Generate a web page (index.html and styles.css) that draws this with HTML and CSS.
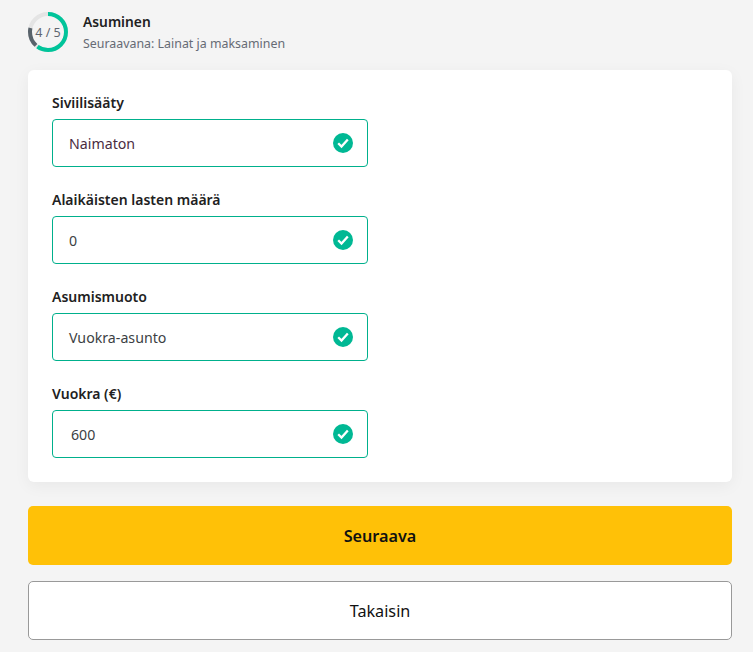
FILE: index.html
```html
<!DOCTYPE html>
<html lang="fi">
<head>
<meta charset="utf-8">
<title>Asuminen</title>
<link rel="stylesheet" href="styles.css">
</head>
<body>
<main class="page">
  <header class="step">
    <div class="ring">
      <svg class="ring-svg" width="40" height="40" viewBox="0 0 40 40">
        <circle class="ring-track" cx="20" cy="20" r="18" pathLength="360"/>
        <circle class="ring-dark" cx="20" cy="20" r="18" pathLength="360"/>
        <circle class="ring-green" cx="20" cy="20" r="18" pathLength="360"/>
      </svg>
      <span class="ring-text">4 / 5</span>
    </div>
    <div class="step-text">
      <div class="step-title">Asuminen</div>
      <div class="step-next">Seuraavana: Lainat ja maksaminen</div>
    </div>
  </header>
  <form class="card">
    <div class="field">
      <label class="label">Siviilisääty</label>
      <div class="input"><span class="value value-plum">Naimaton</span>
        <svg class="check" width="20" height="20" viewBox="0 0 20 20"><circle cx="10" cy="10" r="10" fill="#00b894"/><path d="M5.2 10.3l3.3 3.3 6.3-7.1" fill="none" stroke="#fff" stroke-width="2.3"/></svg></div>
    </div>
    <div class="field">
      <label class="label">Alaikäisten lasten määrä</label>
      <div class="input"><span class="value">0</span>
        <svg class="check" width="20" height="20" viewBox="0 0 20 20"><circle cx="10" cy="10" r="10" fill="#00b894"/><path d="M5.2 10.3l3.3 3.3 6.3-7.1" fill="none" stroke="#fff" stroke-width="2.3"/></svg></div>
    </div>
    <div class="field">
      <label class="label">Asumismuoto</label>
      <div class="input"><span class="value">Vuokra-asunto</span>
        <svg class="check" width="20" height="20" viewBox="0 0 20 20"><circle cx="10" cy="10" r="10" fill="#00b894"/><path d="M5.2 10.3l3.3 3.3 6.3-7.1" fill="none" stroke="#fff" stroke-width="2.3"/></svg></div>
    </div>
    <div class="field">
      <label class="label">Vuokra (€)</label>
      <div class="input"><span class="value value-num">600</span>
        <svg class="check" width="20" height="20" viewBox="0 0 20 20"><circle cx="10" cy="10" r="10" fill="#00b894"/><path d="M5.2 10.3l3.3 3.3 6.3-7.1" fill="none" stroke="#fff" stroke-width="2.3"/></svg></div>
    </div>
  </form>
  <button class="btn btn-primary" type="button">Seuraava</button>
  <button class="btn btn-secondary" type="button">Takaisin</button>
</main>
</body>
</html>
```
FILE: styles.css
```css
* { box-sizing: border-box; }
html, body { margin: 0; padding: 0; }
body {
  background: #f4f4f4;
  font-family: "Noto Sans", "Open Sans", sans-serif;
  color: #212121;
  height: 652px;
  overflow: hidden;
}
.page {
  padding: 12px 21px 0 28px;
  display: flex;
  flex-direction: column;
}
.step {
  display: flex;
  gap: 15px;
  height: 58px;
}
.ring {
  position: relative;
  width: 40px;
  height: 40px;
  flex: none;
}
.ring-svg { display: block; transform: rotate(-90deg); }
.ring-svg circle { fill: none; stroke-width: 4; }
.ring-track { stroke: #e4e4e4; }
.ring-dark { stroke: #59636b; stroke-dasharray: 0 222 61 77; }
.ring-green { stroke: #00c49a; stroke-dasharray: 216 360; }
.ring-text {
  position: absolute;
  inset: 0;
  display: flex;
  align-items: center;
  justify-content: center;
  font-size: 12.5px;
  color: #5f6670;
}
.step-text { padding-top: 1px; }
.step-title {
  font-size: 13.8px;
  font-weight: 600;
  line-height: 18px;
  color: #212121;
}
.step-next {
  font-size: 12.4px;
  line-height: 16px;
  margin-top: 5px;
  color: #666b75;
}
.card {
  background: #fff;
  border-radius: 6px;
  box-shadow: 0 4px 16px rgba(0, 0, 0, 0.05);
  height: 412px;
  padding: 24px 24px 0;
  display: flex;
  flex-direction: column;
  gap: 24px;
}
.field {
  display: flex;
  flex-direction: column;
  gap: 7px;
}
.label {
  font-size: 14px;
  font-weight: 600;
  line-height: 18px;
  color: #212121;
  height: 18px;
}
.input {
  width: 316px;
  height: 48px;
  border: 1px solid #00b08c;
  border-radius: 4px;
  display: flex;
  align-items: center;
  justify-content: space-between;
  padding: 0 14px 0 16px;
  background: #fff;
}
.value { font-size: 14.2px; color: #3c3f44; }
.value-plum { color: #4a2c3f; }
.value-num { padding-left: 2px; }
.check { display: block; flex: none; }
.btn {
  display: block;
  width: 100%;
  height: 59px;
  border-radius: 5px;
  font-family: inherit;
  font-size: 16.2px;
  color: #111;
  padding: 0;
}
.btn-primary {
  margin-top: 24px;
  background: #ffc107;
  border: 0;
  font-weight: 600;
}
.btn-secondary {
  margin-top: 16px;
  background: #fff;
  border: 1px solid #999;
}
```
